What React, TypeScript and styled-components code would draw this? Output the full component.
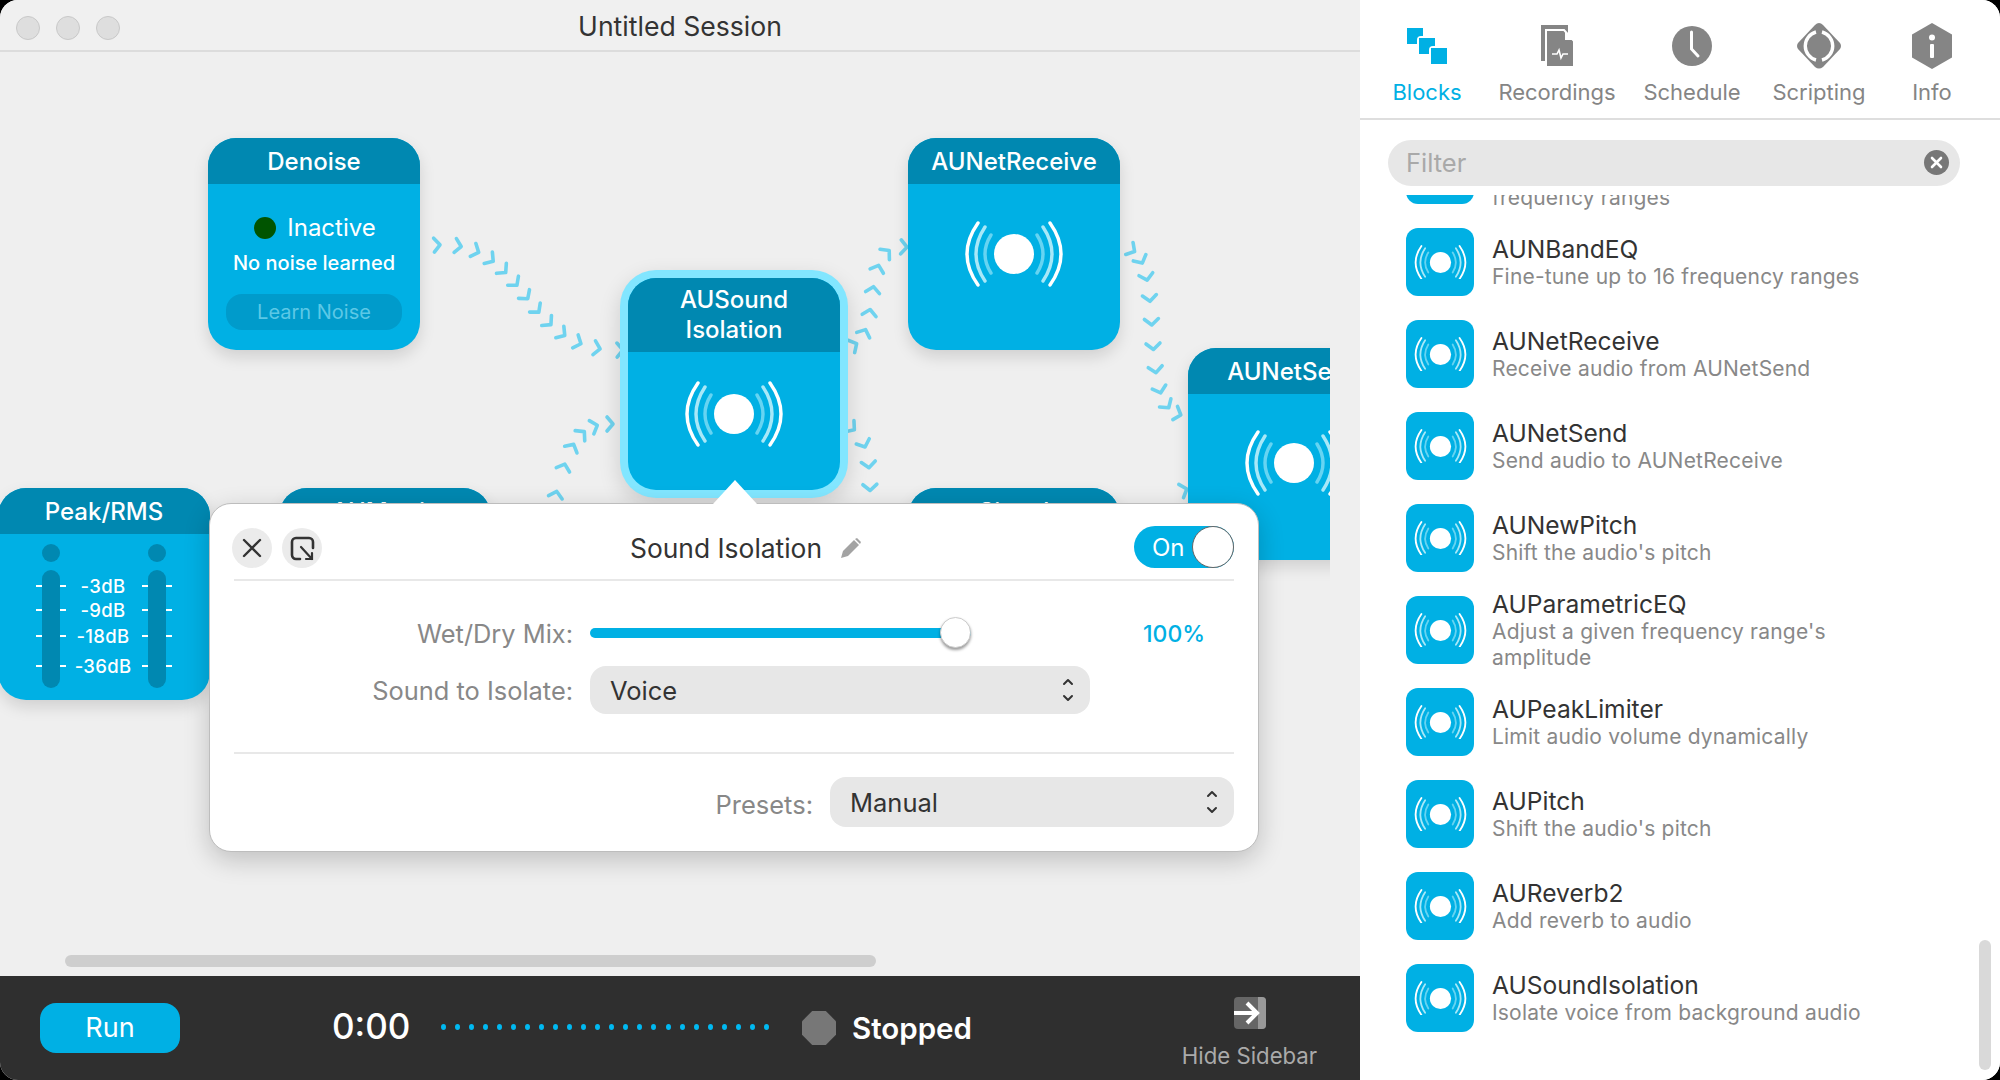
import React from 'react';
import styled, { createGlobalStyle } from 'styled-components';

const GlobalStyle = createGlobalStyle`
  html, body {
    margin: 0;
    padding: 0;
    background: #000;
    font-family: Inter, "Liberation Sans", sans-serif;
    overflow: hidden;
  }
  * { box-sizing: border-box; }
`;

const Window = styled.div`
  width: 2000px;
  height: 1080px;
  display: flex;
  border-radius: 18px;
  overflow: hidden;
  background: #fff;
`;

const LeftPane = styled.div`
  width: 1360px;
  display: flex;
  flex-direction: column;
`;

const TitleBar = styled.div`
  height: 52px;
  flex: none;
  position: relative;
  display: flex;
  align-items: center;
  justify-content: center;
  padding-top: 2px;
  background: #f0f0f0;
  border-bottom: 2px solid #dcdcdc;
  font-size: 26.6px;
  color: #333;
`;

const Lights = styled.div`
  position: absolute;
  left: 16px;
  top: 16px;
  display: flex;
  gap: 16px;
`;

const Light = styled.span`
  width: 24px;
  height: 24px;
  border-radius: 50%;
  background: #dedede;
  border: 1px solid #c8c8c8;
`;

const Canvas = styled.div`
  flex: 1;
  position: relative;
  background: #efefef;
`;

const NodeClip = styled.div`
  position: absolute;
  left: 0;
  top: 0;
  bottom: 0;
  width: 1330px;
  overflow: hidden;
`;

const Wires = styled.svg`
  position: absolute;
  left: 0;
  top: 0;
`;

const Node = styled.div<{ $x: number; $y: number; $selected?: boolean }>`
  position: absolute;
  left: ${p => p.$x}px;
  top: ${p => p.$y}px;
  width: 212px;
  height: 212px;
  border-radius: 28px;
  background: #00b0e4;
  color: #fff;
  box-shadow: ${p =>
    p.$selected
      ? '0 0 0 8px #82e6ff, 0 8px 22px 8px rgba(0,0,0,.14)'
      : '0 7px 16px rgba(0,0,0,.13)'};
`;

const NodeHeader = styled.div<{ $tall?: boolean }>`
  height: ${p => (p.$tall ? 74 : 46)}px;
  padding-top: ${p => (p.$tall ? 0 : 2)}px;
  border-radius: 28px 28px 0 0;
  background: #0088b1;
  display: flex;
  align-items: center;
  justify-content: center;
  text-align: center;
  font-size: 24px;
  font-weight: 500;
  line-height: 30px;
`;

const NodeBody = styled.div<{ $top: number }>`
  display: flex;
  justify-content: center;
  padding-top: ${p => p.$top}px;
`;

const DenoiseBody = styled.div`
  display: flex;
  flex-direction: column;
  align-items: center;
  padding-top: 29px;
`;

const StatusRow = styled.div`
  display: flex;
  align-items: center;
  gap: 11px;
  margin-left: 2px;
  font-size: 24px;
  line-height: 30px;
`;

const StatusDot = styled.span`
  width: 22px;
  height: 22px;
  border-radius: 50%;
  background: #005400;
`;

const StatusText = styled.div`
  margin-top: 9px;
  font-size: 20px;
  font-weight: 500;
  line-height: 22px;
`;

const LearnButton = styled.div`
  margin-top: 20px;
  width: 176px;
  height: 36px;
  padding-top: 1px;
  border-radius: 16px;
  background: #009bcb;
  color: #5cc8e6;
  font-size: 20px;
  line-height: 35px;
  text-align: center;
`;

const PeakBody = styled.div`
  display: flex;
  justify-content: space-between;
  padding: 10px 44px 0;
`;

const Meter = styled.div`
  display: flex;
  flex-direction: column;
  gap: 8px;
`;

const MeterDot = styled.span`
  width: 18px;
  height: 18px;
  border-radius: 50%;
  background: #0088b1;
`;

const MeterBar = styled.span`
  width: 18px;
  height: 118px;
  border-radius: 9px;
  background: #0088b1;
`;

const Scale = styled.div`
  position: absolute;
  left: 38px;
  right: 38px;
  top: 86px;
`;

const ScaleRow = styled.div<{ $after: number }>`
  display: flex;
  align-items: center;
  height: 24px;
  margin-bottom: ${p => p.$after}px;
`;

const Tick = styled.span<{ $skip?: boolean }>`
  width: 6px;
  height: 1.5px;
  background: #fff;
  margin-left: ${p => (p.$skip ? 18 : 0)}px;
`;

const ScaleLabel = styled.span`
  flex: 1;
  text-align: center;
  font-size: 18.5px;
  font-weight: 500;
  letter-spacing: 0.3px;
  margin-left: -2px;
  white-space: nowrap;
`;

const ScrollThumb = styled.div`
  position: absolute;
  left: 65px;
  width: 811px;
  top: 903px;
  height: 12px;
  border-radius: 6px;
  background: #cecece;
`;

const Popover = styled.div`
  position: absolute;
  left: 209px;
  top: 451px;
  width: 1050px;
  height: 349px;
  padding: 0 24px;
  background: #fff;
  border-radius: 22px;
  border: 1px solid #bdbdbd;
  box-shadow: 0 8px 26px rgba(0,0,0,.2);
`;

const PopoverArrow = styled.div`
  position: absolute;
  left: 503px;
  top: -24px;
  width: 0;
  height: 0;
  border-left: 22px solid transparent;
  border-right: 22px solid transparent;
  border-bottom: 24px solid #fff;
`;

const PopoverHeader = styled.div`
  height: 77px;
  padding-top: 24px;
  display: flex;
  align-items: flex-start;
  border-bottom: 2px solid #e8e8e8;
`;

const RoundButton = styled.div`
  width: 40px;
  height: 40px;
  margin-left: -2px;
  margin-right: 12px;
  border-radius: 50%;
  background: #ebebeb;
  display: flex;
  align-items: center;
  justify-content: center;
`;

const PopoverTitle = styled.div`
  margin-left: 296px;
  display: flex;
  align-items: center;
  gap: 18px;
  height: 40px;
  font-size: 26.4px;
  color: #333;
`;

const Toggle = styled.div`
  margin-left: auto;
  margin-top: -2px;
  width: 100px;
  height: 42px;
  border-radius: 21px;
  background: #00b0e4;
  color: #fff;
  display: flex;
  align-items: center;
  justify-content: space-between;
  padding-left: 18px;
  font-size: 24px;
`;

const ToggleKnob = styled.span`
  width: 42px;
  height: 42px;
  border-radius: 50%;
  background: #fff;
  border: 1px solid #666;
`;

const FormSection = styled.div`
  padding: 29px 0 38px;
  border-bottom: 2px solid #e8e8e8;
  display: flex;
  flex-direction: column;
  gap: 10px;
`;

const FormRow = styled.div`
  display: flex;
  align-items: center;
  gap: 17px;
  min-height: 46px;
`;

const FormLabel = styled.div`
  width: 339px;
  text-align: right;
  font-size: 25.4px;
  color: #888;
`;

const Slider = styled.div`
  position: relative;
  width: 381px;
  height: 10px;
  border-radius: 5px;
  background: #00b0e4;
`;

const SliderKnob = styled.span`
  position: absolute;
  right: 0;
  top: -11px;
  width: 31px;
  height: 31px;
  border-radius: 50%;
  background: #fff;
  border: 1px solid #ccc;
  box-shadow: 0 2px 3px rgba(0,0,0,.4);
`;

const Percent = styled.div`
  margin-left: 155px;
  padding-top: 2px;
  font-size: 23px;
  font-weight: 500;
  color: #00b0e4;
`;

const Select = styled.div<{ $width: number; $height: number }>`
  width: ${p => p.$width}px;
  height: ${p => p.$height}px;
  border-radius: 16px;
  background: #e7e7e7;
  display: flex;
  align-items: center;
  justify-content: space-between;
  padding: 0 16px 0 20px;
  font-size: 25.5px;
  color: #333;
`;

const PresetRow = styled.div`
  display: flex;
  justify-content: flex-end;
  align-items: center;
  gap: 17px;
  padding-top: 23px;
`;

const PresetLabel = styled.div`
  font-size: 25.5px;
  color: #888;
  padding-top: 4px;
`;

const BottomBar = styled.div`
  height: 104px;
  flex: none;
  background: #2f2f2f;
  display: flex;
  align-items: center;
  color: #fff;
  padding-left: 40px;
`;

const RunButton = styled.div`
  width: 140px;
  height: 50px;
  margin-bottom: 1px;
  border-radius: 16px;
  background: #00b0e4;
  text-align: center;
  line-height: 50px;
  font-size: 27px;
`;

const Clock = styled.div`
  margin-left: 152px;
  margin-right: 1px;
  margin-bottom: 5px;
  width: 76px;
  font-size: 35px;
  font-weight: 500;
  white-space: nowrap;
`;

const Dots = styled.div`
  margin-left: 32px;
  margin-bottom: 3px;
  width: 328px;
  display: flex;
  justify-content: space-between;
`;

const Dot = styled.span`
  width: 5px;
  height: 6px;
  border-radius: 50%;
  background: #00b9f2;
`;

const StopMark = styled.span`
  margin-left: 33px;
  width: 34px;
  height: 34px;
  background: #777;
  clip-path: polygon(30% 0, 70% 0, 100% 30%, 100% 70%, 70% 100%, 30% 100%, 0 70%, 0 30%);
`;

const StopText = styled.div`
  margin-left: 16px;
  margin-bottom: 1px;
  font-size: 29.5px;
  font-weight: 600;
`;

const HideSidebar = styled.div`
  margin-left: auto;
  margin-top: 11px;
  width: 135px;
  margin-right: 43px;
  display: flex;
  flex-direction: column;
  align-items: center;
  gap: 13px;
  font-size: 22.2px;
  line-height: 28px;
  color: #aaa;
  white-space: nowrap;
`;

const Sidebar = styled.div`
  flex: 1;
  position: relative;
  display: flex;
  flex-direction: column;
  background: #fff;
  overflow: hidden;
`;

const Tabs = styled.div`
  height: 120px;
  flex: none;
  display: grid;
  grid-template-columns: 130px 130px 140px 114px 112px;
  padding: 22px 0 0 2px;
  border-bottom: 2px solid #dedede;
`;

const Tab = styled.div<{ $active?: boolean }>`
  display: flex;
  flex-direction: column;
  align-items: center;
  font-size: 22px;
  color: ${p => (p.$active ? '#00b0e4' : '#858585')};
`;

const TabIcon = styled.div`
  height: 48px;
  margin-bottom: 9px;
  display: flex;
  align-items: center;
`;

const FilterBox = styled.div`
  flex: none;
  margin: 20px 40px 0 28px;
  height: 46px;
  padding: 0 11px 1px 18px;
  border-radius: 23px;
  background: #e7e7e7;
  display: flex;
  align-items: center;
  justify-content: space-between;
  font-size: 25.5px;
  color: #a9a9a9;
`;

const ClearButton = styled.span`
  width: 25px;
  height: 25px;
  border-radius: 50%;
  background: #777;
  display: flex;
  align-items: center;
  justify-content: center;
`;

const ListViewport = styled.div`
  flex: 1;
  margin-top: 9px;
  overflow: hidden;
`;

const List = styled.div`
  margin-top: -59px;
  padding-left: 46px;
  display: flex;
  flex-direction: column;
  gap: 24px;
`;

const Row = styled.div`
  height: 68px;
  display: flex;
  align-items: center;
  gap: 18px;
`;

const RowIcon = styled.div`
  width: 68px;
  height: 68px;
  flex: none;
  border-radius: 12px;
  background: #00b0e4;
  display: flex;
  align-items: center;
  justify-content: center;
`;

const RowText = styled.div`
  width: 400px;
  padding-top: 1px;
`;

const RowTitle = styled.div`
  font-size: 24.6px;
  line-height: 28px;
  color: #333;
`;

const RowSub = styled.div`
  margin-top: 1px;
  font-size: 21px;
  letter-spacing: 0.2px;
  line-height: 26px;
  color: #888;
`;

const SideScroll = styled.div`
  position: absolute;
  left: 619px;
  top: 940px;
  width: 12px;
  height: 130px;
  border-radius: 6px;
  background: #d9d9d9;
`;

// ---- drawings

const WaveIcon = ({ size }: { size: number }) => (
  <svg width={size} height={size * 0.66} viewBox="-50 -33 100 66" fill="none" strokeLinecap="round">
    <circle r="20" fill="#fff" />
    <g strokeWidth="3.4">
      <path d="M-36 -31 Q-58 0 -36 31 M36 -31 Q58 0 36 31" stroke="#fff" />
      <path d="M-29 -27 Q-47 0 -29 27 M29 -27 Q47 0 29 27" stroke="#a8e8f8" />
      <path d="M-23 -19 Q-35 0 -23 19 M23 -19 Q35 0 23 19" stroke="#66d4f2" />
    </g>
  </svg>
);

type Curve = { p: number[]; n: number };

// chevrons walk along a cubic, turned to its tangent
const curves: Curve[] = [
  { p: [437, 245, 530, 240, 520, 352, 620, 350], n: 13 },
  { p: [548, 530, 565, 450, 575, 424, 610, 424], n: 7 },
  { p: [854, 345, 882, 330, 860, 245, 904, 247], n: 7 },
  { p: [1132, 250, 1165, 270, 1138, 400, 1178, 414], n: 10 },
  { p: [852, 428, 880, 450, 862, 500, 878, 530], n: 6 },
  { p: [1150, 510, 1160, 500, 1170, 495, 1184, 490], n: 2 },
];

const chevrons = (c: Curve) => {
  const [x0, y0, x1, y1, x2, y2, x3, y3] = c.p;
  const out: { x: number; y: number; a: number }[] = [];
  for (let i = 0; i < c.n; i++) {
    const t = c.n > 1 ? i / (c.n - 1) : 0;
    const u = 1 - t;
    const x = u * u * u * x0 + 3 * u * u * t * x1 + 3 * u * t * t * x2 + t * t * t * x3;
    const y = u * u * u * y0 + 3 * u * u * t * y1 + 3 * u * t * t * y2 + t * t * t * y3;
    const dx = 3 * u * u * (x1 - x0) + 6 * u * t * (x2 - x1) + 3 * t * t * (x3 - x2);
    const dy = 3 * u * u * (y1 - y0) + 6 * u * t * (y2 - y1) + 3 * t * t * (y3 - y2);
    out.push({ x, y, a: (Math.atan2(dy, dx) * 180) / Math.PI });
  }
  return out;
};

const WireLayer = () => (
  <Wires width="1330" height="924" viewBox="0 52 1330 924" fill="none">
    {curves.flatMap((c, i) =>
      chevrons(c).map((s, j) => (
        <path
          key={`${i}-${j}`}
          d="M-3 -7 L3 0 L-3 7"
          stroke="#6fd3ef"
          strokeWidth="3.6"
          strokeLinecap="round"
          strokeLinejoin="round"
          transform={`translate(${s.x} ${s.y}) rotate(${s.a})`}
        />
      ))
    )}
  </Wires>
);

const BlocksIcon = () => (
  <svg width="40" height="36" viewBox="0 0 40 36">
    <rect width="16" height="16" fill="#00b0e4" />
    <rect x="10" y="8" width="20" height="20" rx="4" fill="#fff" />
    <rect x="12" y="10" width="16" height="16" fill="#00b0e4" />
    <rect x="22" y="18" width="20" height="20" rx="4" fill="#fff" />
    <rect x="24" y="20" width="16" height="16" fill="#00b0e4" />
  </svg>
);

const RecordingsIcon = () => (
  <svg width="34" height="42" viewBox="0 0 34 42">
    <path d="M1 0 H28 V36 H1 Z" fill="#858585" />
    <path d="M6 5 H24 L34 16 V42 H6 Z" fill="#858585" stroke="#fff" strokeWidth="2" />
    <path d="M25 6 V15 H33" fill="#fff" />
    <path d="M12 29 H17 L19 25 L21 33 L23 29 H28" stroke="#fff" strokeWidth="1.6" fill="none" />
  </svg>
);

const ScheduleIcon = () => (
  <svg width="40" height="40" viewBox="0 0 40 40">
    <circle cx="20" cy="20" r="20" fill="#858585" />
    <path d="M19.5 6 V23 L26 30" stroke="#fff" strokeWidth="3" fill="none" strokeLinecap="round" />
  </svg>
);

const ScriptingIcon = () => (
  <svg width="46" height="46" viewBox="0 0 46 46">
    <path d="M23 0 Q25 0 27 2 L44 20 Q46 23 44 26 L27 44 Q23 47 19 44 L2 26 Q0 23 2 20 L19 2 Q21 0 23 0 Z" fill="#858585" />
    <path d="M20 9 A14.5 14.5 0 0 0 20 37 M26 9 A14.5 14.5 0 0 1 26 37" stroke="#fff" strokeWidth="3.4" fill="none" />
  </svg>
);

const InfoIcon = () => (
  <svg width="40" height="46" viewBox="0 0 40 46">
    <path d="M20 0 L40 11.5 V34.5 L20 46 L0 34.5 V11.5 Z" fill="#858585" strokeLinejoin="round" />
    <circle cx="20" cy="14.5" r="3" fill="#fff" />
    <rect x="18" y="21" width="4" height="14" rx="1" fill="#fff" />
  </svg>
);

const CloseIcon = () => (
  <svg width="20" height="20" viewBox="0 0 20 20">
    <path d="M2 2 L18 18 M18 2 L2 18" stroke="#333" strokeWidth="2.4" strokeLinecap="round" />
  </svg>
);

const PopOutIcon = () => (
  <svg width="25" height="25" viewBox="0 0 25 25" fill="none" stroke="#333" strokeWidth="2.6" strokeLinecap="round">
    <path d="M10 23 H6 A4 4 0 0 1 2 19 V6 A4 4 0 0 1 6 2 H19 A4 4 0 0 1 23 6 V12" />
    <path d="M11 11 L22 23 M22 17 V23 H16" strokeWidth="2.2" />
  </svg>
);

const PencilIcon = () => (
  <svg width="21" height="21" viewBox="0 0 21 21">
    <path d="M1 20 L3 13 L14 2 L19 7 L8 18 Z" fill="#a3a3a3" />
    <path d="M15 1 L17 0 L21 4 L20 6 Z" fill="#a3a3a3" />
  </svg>
);

const UpDownIcon = () => (
  <svg width="12" height="26" viewBox="0 0 12 26" fill="none" stroke="#333" strokeWidth="2" strokeLinecap="round" strokeLinejoin="round">
    <path d="M2 7 L6 3 L10 7 M2 19 L6 23 L10 19" />
  </svg>
);

const ClearIcon = () => (
  <svg width="13" height="13" viewBox="0 0 13 13">
    <path d="M2 2 L11 11 M11 2 L2 11" stroke="#fff" strokeWidth="2.6" strokeLinecap="round" />
  </svg>
);

const HideIcon = () => (
  <svg width="32" height="32" viewBox="0 0 32 32">
    <rect width="32" height="32" rx="4" fill="#666" />
    <path d="M24 0 H28 A4 4 0 0 1 32 4 V28 A4 4 0 0 1 28 32 H24 Z" fill="#999" />
    <path d="M0 16 H22 M13 6 L23 16 L13 26" stroke="#fff" strokeWidth="4" fill="none" />
  </svg>
);

const scale = [
  { label: '-3dB', after: 0 },
  { label: '-9dB', after: 2 },
  { label: '-18dB', after: 6 },
  { label: '-36dB', after: 0 },
];

const rows = [
  { title: 'AUMultibandCompressor', sub: 'Adjust dynamics across multiple frequency ranges' },
  { title: 'AUNBandEQ', sub: 'Fine-tune up to 16 frequency ranges' },
  { title: 'AUNetReceive', sub: 'Receive audio from AUNetSend' },
  { title: 'AUNetSend', sub: 'Send audio to AUNetReceive' },
  { title: 'AUNewPitch', sub: "Shift the audio's pitch" },
  { title: 'AUParametricEQ', sub: "Adjust a given frequency range's amplitude" },
  { title: 'AUPeakLimiter', sub: 'Limit audio volume dynamically' },
  { title: 'AUPitch', sub: "Shift the audio's pitch" },
  { title: 'AUReverb2', sub: 'Add reverb to audio' },
  { title: 'AUSoundIsolation', sub: 'Isolate voice from background audio' },
];

export default function App() {
  return (
    <>
      <GlobalStyle />
      <Window>
        <LeftPane>
          <TitleBar>
            <Lights>
              <Light />
              <Light />
              <Light />
            </Lights>
            Untitled Session
          </TitleBar>
          <Canvas>
            <NodeClip>
              <WireLayer />
              <Node $x={208} $y={86}>
                <NodeHeader>Denoise</NodeHeader>
                <DenoiseBody>
                  <StatusRow>
                    <StatusDot />
                    Inactive
                  </StatusRow>
                  <StatusText>No noise learned</StatusText>
                  <LearnButton>Learn Noise</LearnButton>
                </DenoiseBody>
              </Node>
              <Node $x={908} $y={86}>
                <NodeHeader>AUNetReceive</NodeHeader>
                <NodeBody $top={37}>
                  <WaveIcon size={100} />
                </NodeBody>
              </Node>
              <Node $x={628} $y={226} $selected>
                <NodeHeader $tall>
                  AUSound
                  <br />
                  Isolation
                </NodeHeader>
                <NodeBody $top={29}>
                  <WaveIcon size={100} />
                </NodeBody>
              </Node>
              <Node $x={1188} $y={296}>
                <NodeHeader>AUNetSend</NodeHeader>
                <NodeBody $top={36}>
                  <WaveIcon size={100} />
                </NodeBody>
              </Node>
              <Node $x={-2} $y={436}>
                <NodeHeader>Peak/RMS</NodeHeader>
                <PeakBody>
                  <Meter>
                    <MeterDot />
                    <MeterBar />
                  </Meter>
                  <Meter>
                    <MeterDot />
                    <MeterBar />
                  </Meter>
                </PeakBody>
                <Scale>
                  {scale.map(s => (
                    <ScaleRow key={s.label} $after={s.after}>
                      <Tick />
                      <Tick $skip />
                      <ScaleLabel>{s.label}</ScaleLabel>
                      <Tick />
                      <Tick $skip />
                    </ScaleRow>
                  ))}
                </Scale>
              </Node>
              <Node $x={279} $y={436}>
                <NodeHeader>AUMatrix</NodeHeader>
              </Node>
              <Node $x={908} $y={436}>
                <NodeHeader>Signal</NodeHeader>
              </Node>
            </NodeClip>
            <ScrollThumb />
            <Popover>
              <PopoverArrow />
              <PopoverHeader>
                <RoundButton>
                  <CloseIcon />
                </RoundButton>
                <RoundButton>
                  <PopOutIcon />
                </RoundButton>
                <PopoverTitle>
                  Sound Isolation
                  <PencilIcon />
                </PopoverTitle>
                <Toggle>
                  On
                  <ToggleKnob />
                </Toggle>
              </PopoverHeader>
              <FormSection>
                <FormRow>
                  <FormLabel>Wet/Dry Mix:</FormLabel>
                  <Slider>
                    <SliderKnob />
                  </Slider>
                  <Percent>100%</Percent>
                </FormRow>
                <FormRow>
                  <FormLabel>Sound to Isolate:</FormLabel>
                  <Select $width={500} $height={48}>
                    Voice
                    <UpDownIcon />
                  </Select>
                </FormRow>
              </FormSection>
              <PresetRow>
                <PresetLabel>Presets:</PresetLabel>
                <Select $width={404} $height={50}>
                  Manual
                  <UpDownIcon />
                </Select>
              </PresetRow>
            </Popover>
          </Canvas>
          <BottomBar>
            <RunButton>Run</RunButton>
            <Clock>0:00</Clock>
            <Dots>
              {Array.from({ length: 24 }, (_, i) => (
                <Dot key={i} />
              ))}
            </Dots>
            <StopMark />
            <StopText>Stopped</StopText>
            <HideSidebar>
              <HideIcon />
              Hide Sidebar
            </HideSidebar>
          </BottomBar>
        </LeftPane>
        <Sidebar>
          <Tabs>
            <Tab $active>
              <TabIcon>
                <BlocksIcon />
              </TabIcon>
              Blocks
            </Tab>
            <Tab>
              <TabIcon>
                <RecordingsIcon />
              </TabIcon>
              Recordings
            </Tab>
            <Tab>
              <TabIcon>
                <ScheduleIcon />
              </TabIcon>
              Schedule
            </Tab>
            <Tab>
              <TabIcon>
                <ScriptingIcon />
              </TabIcon>
              Scripting
            </Tab>
            <Tab>
              <TabIcon>
                <InfoIcon />
              </TabIcon>
              Info
            </Tab>
          </Tabs>
          <FilterBox>
            Filter
            <ClearButton>
              <ClearIcon />
            </ClearButton>
          </FilterBox>
          <ListViewport>
            <List>
              {rows.map(r => (
                <Row key={r.title}>
                  <RowIcon>
                    <WaveIcon size={53} />
                  </RowIcon>
                  <RowText>
                    <RowTitle>{r.title}</RowTitle>
                    <RowSub>{r.sub}</RowSub>
                  </RowText>
                </Row>
              ))}
            </List>
          </ListViewport>
          <SideScroll />
        </Sidebar>
      </Window>
    </>
  );
}
